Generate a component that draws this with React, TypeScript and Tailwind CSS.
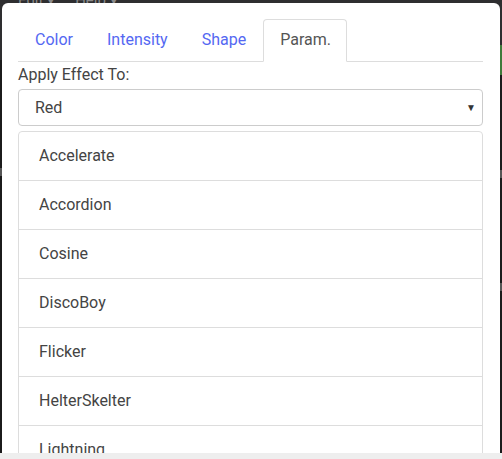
const tabs = ["Color", "Intensity", "Shape", "Param."];
const effects = ["Accelerate", "Accordion", "Cosine", "DiscoBoy", "Flicker", "HelterSkelter", "Lightning", "Marquee"];

export default function App() {
  return (
    <div className="relative h-[459px] w-[502px] overflow-hidden bg-[#1b1b1b] font-['Roboto',sans-serif]">
      {/* page behind the dialog */}
      <div className="absolute left-0 top-0 flex h-[60px] w-full gap-[20px] bg-[#2e2e30] pl-[18px] text-[15px] leading-[14px] text-[#8a8a8a]">
        <span className="-mt-[7px]">Edit ▾</span>
        <span className="-mt-[7px]">Help ▾</span>
      </div>
      <div className="absolute right-0 top-[45px] h-[30px] w-[2px] bg-[#3f7a3a]" />
      <div className="absolute left-0 top-[168px] h-[8px] w-[2px] bg-[#555]" />
      <div className="absolute right-0 top-[170px] h-[8px] w-[2px] bg-[#555]" />
      <div className="absolute right-0 top-[283px] h-[8px] w-[2px] bg-[#555]" />

      {/* dialog */}
      <div className="absolute left-[2px] top-[3px] flex h-[450px] w-[498px] flex-col overflow-hidden rounded-t-[6px] bg-white pl-[16px] pr-[17px] pt-[16px]">
        <div className="flex shrink-0 border-b border-[#dddddd]">
          {tabs.map((t, i) =>
            i === 3 ? (
              <div
                key={t}
                className="-mb-px mr-[1px] rounded-t-[4px] border border-[#dddddd] border-b-white bg-white pl-[16px] pr-[15px] py-[10px] text-[16px] leading-[20px] text-[#555555]"
              >
                {t}
              </div>
            ) : (
              <div
                key={t}
                className="mr-[1px] border border-transparent pl-[16px] pr-[15px] py-[10px] text-[16px] leading-[20px] text-[#5468f2]"
              >
                {t}
              </div>
            )
          )}
        </div>

        <label className="mb-[4px] mt-[3px] shrink-0 text-[16px] leading-[20px] text-[#444444]">Apply Effect To:</label>

        <div className="flex h-[37px] shrink-0 items-center justify-between rounded-[4px] border border-[#cccccc] pl-[16px] pr-[6px] text-[16px] text-[#444444]">
          <span>Red</span>
          <span className="text-[10px] text-[#333333]">▼</span>
        </div>

        <div className="mt-[5px] shrink-0 rounded-t-[4px] border border-[#dddddd]">
          {effects.map((e) => (
            <div
              key={e}
              className="flex h-[49px] items-center border-b border-[#dddddd] pl-[20px] text-[16px] text-[#444444]"
            >
              {e}
            </div>
          ))}
        </div>
      </div>

      <div className="absolute bottom-0 left-0 h-[6px] w-full bg-[#eeeeee]" />
    </div>
  );
}
